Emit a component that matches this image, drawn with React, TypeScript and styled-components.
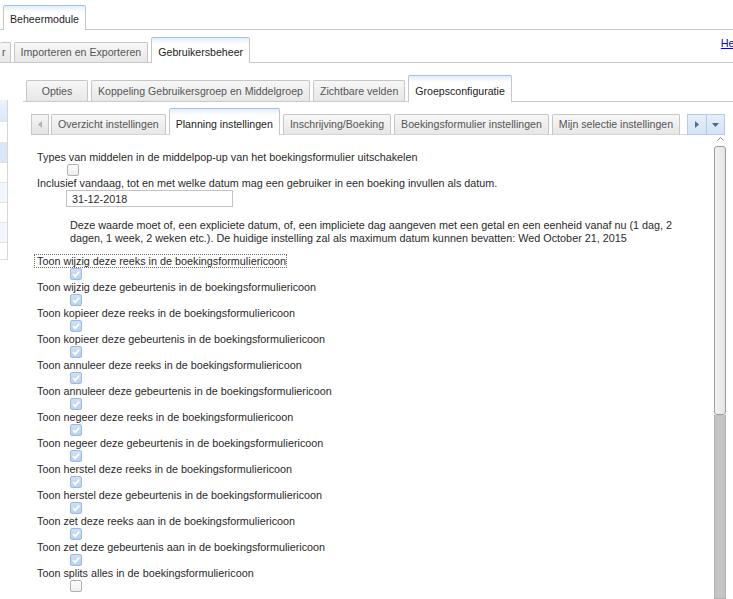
import React, { FC } from 'react';
import styled, { createGlobalStyle } from 'styled-components';

const GlobalStyle = createGlobalStyle`
  html, body {
    margin: 0;
    padding: 0;
    background: #fff;
  }

  body {
    font-family: "Liberation Sans", Arial, sans-serif;
    font-size: 10.8px;
    color: #2a2a2a;
  }
`;

const Page = styled.div`
  width: 733px;
  height: 599px;
  overflow: hidden;
  display: flex;
  flex-direction: column;
`;

// one strip of tabs sitting on a grey line
const TabStrip = styled.div<{ $height: number; $padLeft?: number; $gap?: number }>`
  box-sizing: border-box;
  flex-shrink: 0;
  height: ${(p) => p.$height}px;
  display: flex;
  align-items: flex-end;
  gap: ${(p) => p.$gap ?? 3}px;
  padding-left: ${(p) => p.$padLeft ?? 0}px;
  border-bottom: 1px solid #c9c9c9;
`;

const Tab = styled.div<{ $active?: boolean; $h: number; $ah: number; $cut?: boolean; $minWidth?: number }>`
  box-sizing: border-box;
  flex-shrink: 0;
  height: ${(p) => (p.$active ? p.$ah : p.$h)}px;
  min-width: ${(p) => p.$minWidth ?? 0}px;
  margin-bottom: ${(p) => (p.$active ? -1 : 0)}px;
  padding: 0 6px ${(p) => (p.$active ? 4 : 3)}px;
  display: flex;
  align-items: flex-end;
  justify-content: center;
  font-size: 10.6px;
  line-height: 13px;
  white-space: nowrap;
  border: 1px solid #c6c6c6;
  border-bottom: none;
  border-top-color: ${(p) => (p.$active ? '#a3c3e6' : '#c6c6c6')};
  border-radius: 2px 2px 0 0;
  color: ${(p) => (p.$active ? '#1c1c1c' : '#555')};
  background: ${(p) =>
    p.$active ? 'linear-gradient(#e2edf9, #ffffff 6px)' : 'linear-gradient(#f7f7f7, #e7e7e7)'};

  ${(p) => p.$cut && 'border-left: none; padding-left: 2px; padding-right: 4px;'}
`;

const HelpLink = styled.a`
  align-self: flex-start;
  flex-shrink: 0;
  margin: 7px -10px 0 auto;
  line-height: 13px;
  color: #0000ee;
  text-decoration: underline;
  cursor: pointer;
`;

const Main = styled.div`
  flex: 1;
  min-height: 0;
  display: flex;
`;

const SideList = styled.div`
  flex-shrink: 0;
  align-self: flex-start;
  width: 7px;
  margin-top: 37px;
  border-right: 1px solid #d6d6d6;
`;

const sideTones = {
  head: 'linear-gradient(#ecf3fb, #dae8f7)',
  sel: '#d9e8f8',
  alt: '#f1f7fd',
  plain: '#fff',
};

const SideRow = styled.div<{ $tone: keyof typeof sideTones; $h: number }>`
  height: ${(p) => p.$h}px;
  border-bottom: 1px solid #e6e1da;
  background: ${(p) => sideTones[p.$tone]};
`;

const Panel = styled.div`
  flex: 1;
  min-width: 0;
  margin-left: 15px;
  display: flex;
  flex-direction: column;
`;

const SubSection = styled.div`
  padding: 0 8px;
`;

const SubStrip = styled(TabStrip)`
  border-bottom-color: #d6d6d6;
`;

const StripButton = styled.div<{ $blue?: boolean; $w: number }>`
  box-sizing: border-box;
  flex-shrink: 0;
  width: ${(p) => p.$w}px;
  height: 21px;
  margin-bottom: -1px;
  display: flex;
  align-items: center;
  justify-content: center;
  border: 1px solid ${(p) => (p.$blue ? '#b4cce7' : '#c6c6c6')};
  background: ${(p) =>
    p.$blue ? 'linear-gradient(#e6effa, #d3e3f5)' : 'linear-gradient(#f5f5f5, #e3e3e3)'};
`;

const ButtonPair = styled.div`
  display: flex;
  margin-left: auto;

  & > * + * {
    margin-left: -1px;
  }
`;

const ContentRow = styled.div`
  flex: 1;
  min-height: 0;
  display: flex;
  padding: 0 7px 0 8px;
`;

const FormBody = styled.div`
  flex: 1;
  min-width: 0;
  overflow: hidden;
  padding: 15px 10px 0 6px;
`;

const ScrollBar = styled.div`
  flex-shrink: 0;
  width: 12px;
  display: flex;
  flex-direction: column;
`;

const ScrollUp = styled.div`
  height: 11px;
  display: flex;
  align-items: flex-start;
  justify-content: center;
  padding-top: 2px;
  box-sizing: border-box;
`;

const Thumb = styled.div`
  box-sizing: border-box;
  height: 269px;
  border: 1px solid #9c9c9c;
  border-radius: 3px;
  background: linear-gradient(90deg, #f2f2f2, #e4e4e4);
`;

const Track = styled.div`
  flex: 1;
  box-sizing: border-box;
  border: 1px solid #b3b3b3;
  border-top: none;
  background: #c4c4c4;
`;

const FieldLabel = styled.div`
  line-height: 14px;
  height: 14px;
  white-space: nowrap;
`;

const FocusRing = styled.span`
  display: inline-block;
  outline: 1px dotted #707070;
  outline-offset: -1px;
  padding: 0 1px 0 3px;
  margin-left: -3px;
`;

const ControlRow = styled.div<{ $indent: number }>`
  display: flex;
  padding-left: ${(p) => p.$indent}px;
`;

const Check = styled.span<{ $checked?: boolean }>`
  box-sizing: border-box;
  width: 12px;
  height: 12px;
  display: flex;
  align-items: center;
  justify-content: center;
  border: 1px solid ${(p) => (p.$checked ? '#9dbbdd' : '#b2b2b2')};
  border-radius: 2px;
  background: ${(p) => (p.$checked ? 'linear-gradient(#cfe0f4, #b9d2ee)' : 'linear-gradient(#ffffff, #ececec)')};
`;

const DateInput = styled.input`
  box-sizing: border-box;
  width: 167px;
  height: 17px;
  margin: 0;
  padding: 0 5px;
  border: 1px solid #c3c3c3;
  font-family: "Liberation Sans", Arial, sans-serif;
  font-size: 10.8px;
  color: #2a2a2a;
  background: #fff;
  outline: none;
`;

const Hint = styled.div`
  padding: 12px 0 9px 33px;
  line-height: 13px;
`;

const Tick: FC = () => (
  <svg width="10" height="10" viewBox="0 0 10 10">
    <polyline points="2,5.2 4.2,7.4 8.2,2.6" fill="none" stroke="#fff" strokeWidth="1.7" />
  </svg>
);

const CheckBox: FC<{ checked?: boolean }> = ({ checked }) => (
  <Check $checked={checked}>{checked && <Tick />}</Check>
);

const topTabs = ['Importeren en Exporteren', 'Gebruikersbeheer'];
const groupTabs = ['Opties', 'Koppeling Gebruikersgroep en Middelgroep', 'Zichtbare velden', 'Groepsconfiguratie'];
const subTabs = [
  'Overzicht instellingen',
  'Planning instellingen',
  'Inschrijving/Boeking',
  'Boekingsformulier instellingen',
  'Mijn selectie instellingen',
];

const sideRows: [keyof typeof sideTones, number][] = [
  ['head', 21],
  ['plain', 20],
  ['sel', 19],
  ['plain', 19],
  ['alt', 19],
  ['plain', 19],
  ['alt', 19],
  ['plain', 16],
];

const actions = ['wijzig', 'kopieer', 'annuleer', 'negeer', 'herstel'];
const toggles: { label: string; checked: boolean }[] = [
  ...actions.flatMap((a) => [
    { label: `Toon ${a} deze reeks in de boekingsformuliericoon`, checked: true },
    { label: `Toon ${a} deze gebeurtenis in de boekingsformuliericoon`, checked: true },
  ]),
  { label: 'Toon zet deze reeks aan in de boekingsformuliericoon', checked: true },
  { label: 'Toon zet deze gebeurtenis aan in de boekingsformuliericoon', checked: true },
  { label: 'Toon splits alles in de boekingsformuliericoon', checked: false },
];

const App: FC = () => {
  return (
    <Page>
      <GlobalStyle />

      <TabStrip $height={30} $padLeft={3}>
        <Tab $active $h={20} $ah={25}>Beheermodule</Tab>
      </TabStrip>

      <TabStrip $height={33} $gap={3}>
        <Tab $cut $h={20} $ah={26}>r</Tab>
        {topTabs.map((t) => (
          <Tab key={t} $active={t === 'Gebruikersbeheer'} $h={20} $ah={26}>{t}</Tab>
        ))}
        <HelpLink>Help</HelpLink>
      </TabStrip>

      <Main>
        <SideList>
          {sideRows.map(([tone, h], i) => (
            <SideRow key={i} $tone={tone} $h={h} />
          ))}
        </SideList>

        <Panel>
          <TabStrip $height={39} $padLeft={3}>
            {groupTabs.map((t) => (
              <Tab key={t} $active={t === 'Groepsconfiguratie'} $h={21} $ah={27} $minWidth={62}>{t}</Tab>
            ))}
          </TabStrip>

          <SubSection>
            <SubStrip $height={33} $gap={3}>
              <StripButton $w={18} style={{ marginRight: -1 }}>
                <svg width="4" height="7" viewBox="0 0 4 7">
                  <path d="M4 0 L0 3.5 L4 7 Z" fill="#b3b3b3" />
                </svg>
              </StripButton>
              {subTabs.map((t, i) => (
                <Tab key={t} $active={i === 1} $h={20} $ah={27}>{t}</Tab>
              ))}
              <ButtonPair>
                <StripButton $blue $w={20}>
                  <svg width="4" height="7" viewBox="0 0 4 7">
                    <path d="M0 0 L4 3.5 L0 7 Z" fill="#4f6f9c" />
                  </svg>
                </StripButton>
                <StripButton $blue $w={19}>
                  <svg width="7" height="4" viewBox="0 0 7 4">
                    <path d="M0 0 L7 0 L3.5 4 Z" fill="#4a6a98" />
                  </svg>
                </StripButton>
              </ButtonPair>
            </SubStrip>
          </SubSection>

          <ContentRow>
            <FormBody>
              <FieldLabel>Types van middelen in de middelpop-up van het boekingsformulier uitschakelen</FieldLabel>
              <ControlRow $indent={30}>
                <CheckBox />
              </ControlRow>

              <FieldLabel>
                Inclusief vandaag, tot en met welke datum mag een gebruiker in een boeking invullen als datum.
              </FieldLabel>
              <ControlRow $indent={29}>
                <DateInput defaultValue="31-12-2018" readOnly />
              </ControlRow>
              <Hint>
                Deze waarde moet of, een expliciete datum, of, een impliciete dag aangeven met een getal en een
                eenheid vanaf nu (1 dag, 2 dagen, 1 week, 2 weken etc.). De huidige instelling zal als maximum
                datum kunnen bevatten: Wed October 21, 2015
              </Hint>

              {toggles.map((t, i) => (
                <div key={t.label}>
                  <FieldLabel>{i === 0 ? <FocusRing>{t.label}</FocusRing> : t.label}</FieldLabel>
                  <ControlRow $indent={33}>
                    <CheckBox checked={t.checked} />
                  </ControlRow>
                </div>
              ))}
            </FormBody>

            <ScrollBar>
              <ScrollUp>
                <svg width="7" height="4" viewBox="0 0 7 4">
                  <polyline points="0.5,3.5 3.5,0.5 6.5,3.5" fill="none" stroke="#8a8a8a" strokeWidth="1" />
                </svg>
              </ScrollUp>
              <Thumb />
              <Track />
            </ScrollBar>
          </ContentRow>
        </Panel>
      </Main>
    </Page>
  );
};

export default App;
